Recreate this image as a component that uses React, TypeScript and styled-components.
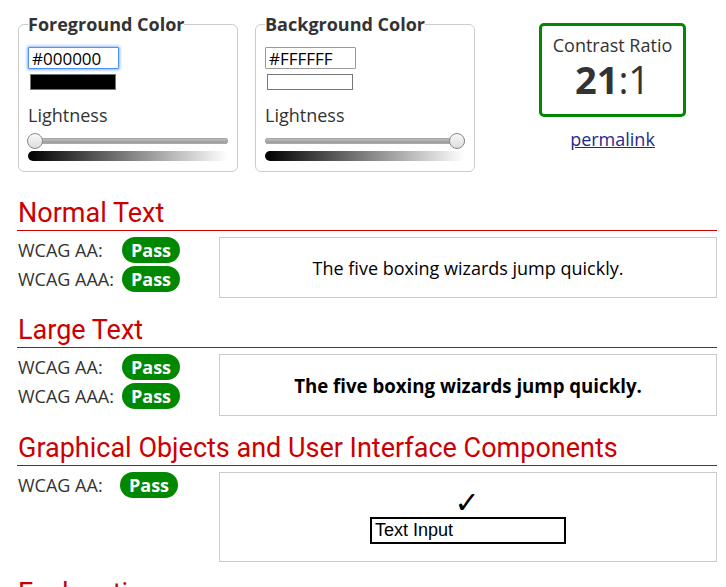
import React from 'react';
import styled, { createGlobalStyle } from 'styled-components';

const GlobalStyle = createGlobalStyle`
  html, body {
    margin: 0;
    padding: 0;
    background: #fff;
  }
  body {
    font-family: 'Open Sans', 'Liberation Sans', sans-serif;
    color: #333;
    font-size: 18px;
  }
`;

const Page = styled.div`
  width: 726px;
  box-sizing: border-box;
  padding: 12px 9px 0 17px;
`;

const TopRow = styled.div`
  display: flex;
  align-items: flex-start;
  gap: 17px;
  height: 160px;
  padding-left: 1px;
`;

const Fieldset = styled.fieldset`
  width: 220px;
  height: 160px;
  box-sizing: border-box;
  margin: 0;
  padding: 0 9px 10px 9px;
  border: 1px solid #ccc;
  border-radius: 6px;
  min-width: 0;
`;

const Legend = styled.legend`
  padding: 0;
  margin-left: 0;
  font-weight: 700;
  font-size: 18px;
  line-height: 24px;
  color: #333;
`;

const HexInput = styled.input<{ $focused?: boolean }>`
  display: block;
  box-sizing: border-box;
  width: 91px;
  height: 22px;
  margin: 11px 0 0 0;
  padding: 0 3px;
  font-family: 'Open Sans', sans-serif;
  font-size: 17px;
  color: #000;
  border: 1px solid ${(p) => (p.$focused ? '#4d90fe' : '#999')};
  border-radius: 1px;
  outline: none;
  box-shadow: ${(p) => (p.$focused ? '0 0 3px 1px #8ab8f5' : 'none')};
`;

const Swatch = styled.div<{ $color: string }>`
  width: 86px;
  height: 16px;
  box-sizing: border-box;
  margin: 5px 0 0 2px;
  background: ${(p) => p.$color};
  border: 1px solid #777;
`;

const Label = styled.div`
  margin-top: 14px;
  font-size: 18px;
  line-height: 23px;
`;

const Slider = styled.div`
  position: relative;
  height: 16px;
  margin-top: 6px;
  display: flex;
  align-items: center;
`;

const Track = styled.div`
  flex: 1;
  height: 4px;
  border-radius: 2px;
  background: linear-gradient(#bbb, #999);
  border: 1px solid #aaa;
`;

const Thumb = styled.div`
  position: absolute;
  top: 0;
  width: 16px;
  height: 16px;
  box-sizing: border-box;
  border-radius: 50%;
  border: 1px solid #8a8a8a;
  background: linear-gradient(#fafafa, #dcdcdc);
  transform: translateX(-1px);
`;

const Gradient = styled.div`
  height: 10px;
  margin-top: 2px;
  border-radius: 5px;
  background: linear-gradient(to right, #000, #fff);
`;

const RatioColumn = styled.div`
  width: 147px;
  margin-left: 47px;
  margin-top: 11px;
  display: flex;
  flex-direction: column;
  align-items: center;
`;

const RatioBox = styled.div`
  width: 147px;
  height: 94px;
  box-sizing: border-box;
  border: 3px solid #080;
  border-radius: 5px;
  padding-top: 8px;
  text-align: center;
`;

const RatioTitle = styled.div`
  font-size: 18px;
  line-height: 23px;
`;

const RatioValue = styled.div`
  font-size: 38px;
  line-height: 44px;
  b {
    font-weight: 700;
  }
`;

const Permalink = styled.a`
  margin-top: 10px;
  font-size: 18px;
  color: #1f2a8c;
  text-decoration: underline;
`;

const Heading = styled.h2<{ $top: number }>`
  margin: ${(p) => p.$top}px 0 0 0;
  padding: 0 0 2px 1px;
  font-family: Roboto, 'Liberation Sans', sans-serif;
  font-weight: 400;
  font-size: 27px;
  line-height: 30px;
  color: #c00;
  border-bottom: 1px solid #c00;
`;

const Section = styled.div`
  display: grid;
  grid-template-columns: 202px 1fr;
  margin-top: 6px;
`;

const Results = styled.div`
  display: flex;
  flex-direction: column;
  gap: 3px;
`;

const ResultRow = styled.div<{ $labelWidth: number }>`
  display: grid;
  grid-template-columns: ${(p) => p.$labelWidth}px auto;
  align-items: center;
  height: 26px;
  padding-left: 1px;
  font-size: 18px;
`;

const Badge = styled.span`
  display: inline-block;
  width: 58px;
  height: 26px;
  line-height: 26px;
  border-radius: 13px;
  background: #080;
  color: #fff;
  font-weight: 700;
  font-size: 18px;
  text-align: center;
`;

const Example = styled.div<{ $height: number; $bold?: boolean }>`
  height: ${(p) => p.$height}px;
  box-sizing: border-box;
  border: 1px solid #ccc;
  display: flex;
  align-items: center;
  justify-content: center;
  color: #000;
  font-size: ${(p) => (p.$bold ? '18.67px' : '18px')};
  font-weight: ${(p) => (p.$bold ? 700 : 400)};
`;

const UiExample = styled.div`
  height: 90px;
  box-sizing: border-box;
  border: 1px solid #ccc;
  display: flex;
  flex-direction: column;
  align-items: center;
  padding-top: 15px;
`;

const Check = styled.span`
  font-family: 'DejaVu Sans', sans-serif;
  font-weight: 700;
  font-size: 30px;
  line-height: 29px;
  height: 29px;
  color: #000;
  margin-left: -2px;
`;

const DemoInput = styled.div`
  width: 196px;
  height: 27px;
  box-sizing: border-box;
  border: 2px solid #000;
  padding: 0 3px;
  font-family: 'Liberation Sans', Arial, sans-serif;
  font-size: 18px;
  line-height: 23px;
  color: #000;
  text-align: left;
`;

type ColorPickerProps = {
  title: string;
  hex: string;
  focused?: boolean;
  lightness: number;
};

const ColorPicker = ({ title, hex, focused, lightness }: ColorPickerProps) => (
  <Fieldset>
    <Legend>{title}</Legend>
    <HexInput $focused={focused} defaultValue={hex} />
    <Swatch $color={hex} />
    <Label>Lightness</Label>
    <Slider>
      <Track />
      <Thumb style={{ left: `calc(${lightness}% - ${(lightness / 100) * 15}px)` }} />
    </Slider>
    <Gradient />
  </Fieldset>
);

const ResultList = ({ levels, labelWidth }: { levels: string[]; labelWidth: number }) => (
  <Results>
    {levels.map((level) => (
      <ResultRow key={level} $labelWidth={labelWidth}>
        <span>WCAG {level}:</span>
        <Badge>Pass</Badge>
      </ResultRow>
    ))}
  </Results>
);

const SAMPLE = 'The five boxing wizards jump quickly.';

export default function App() {
  return (
    <>
      <GlobalStyle />
      <Page>
        <TopRow>
          <ColorPicker title="Foreground Color" hex="#000000" focused lightness={0} />
          <ColorPicker title="Background Color" hex="#FFFFFF" lightness={100} />
          <RatioColumn>
            <RatioBox>
              <RatioTitle>Contrast Ratio</RatioTitle>
              <RatioValue>
                <b>21</b>:1
              </RatioValue>
            </RatioBox>
            <Permalink href="#">permalink</Permalink>
          </RatioColumn>
        </TopRow>

        <Heading $top={26}>Normal Text</Heading>
        <Section>
          <ResultList levels={['AA', 'AAA']} labelWidth={104} />
          <Example $height={61}>{SAMPLE}</Example>
        </Section>

        <Heading $top={17}>Large Text</Heading>
        <Section>
          <ResultList levels={['AA', 'AAA']} labelWidth={104} />
          <Example $height={62} $bold>
            {SAMPLE}
          </Example>
        </Section>

        <Heading $top={17}>Graphical Objects and User Interface Components</Heading>
        <Section>
          <ResultList levels={['AA']} labelWidth={102} />
          <UiExample>
            <Check>✓</Check>
            <DemoInput>Text Input</DemoInput>
          </UiExample>
        </Section>

        <Heading $top={16}>Explanation</Heading>
      </Page>
    </>
  );
}
